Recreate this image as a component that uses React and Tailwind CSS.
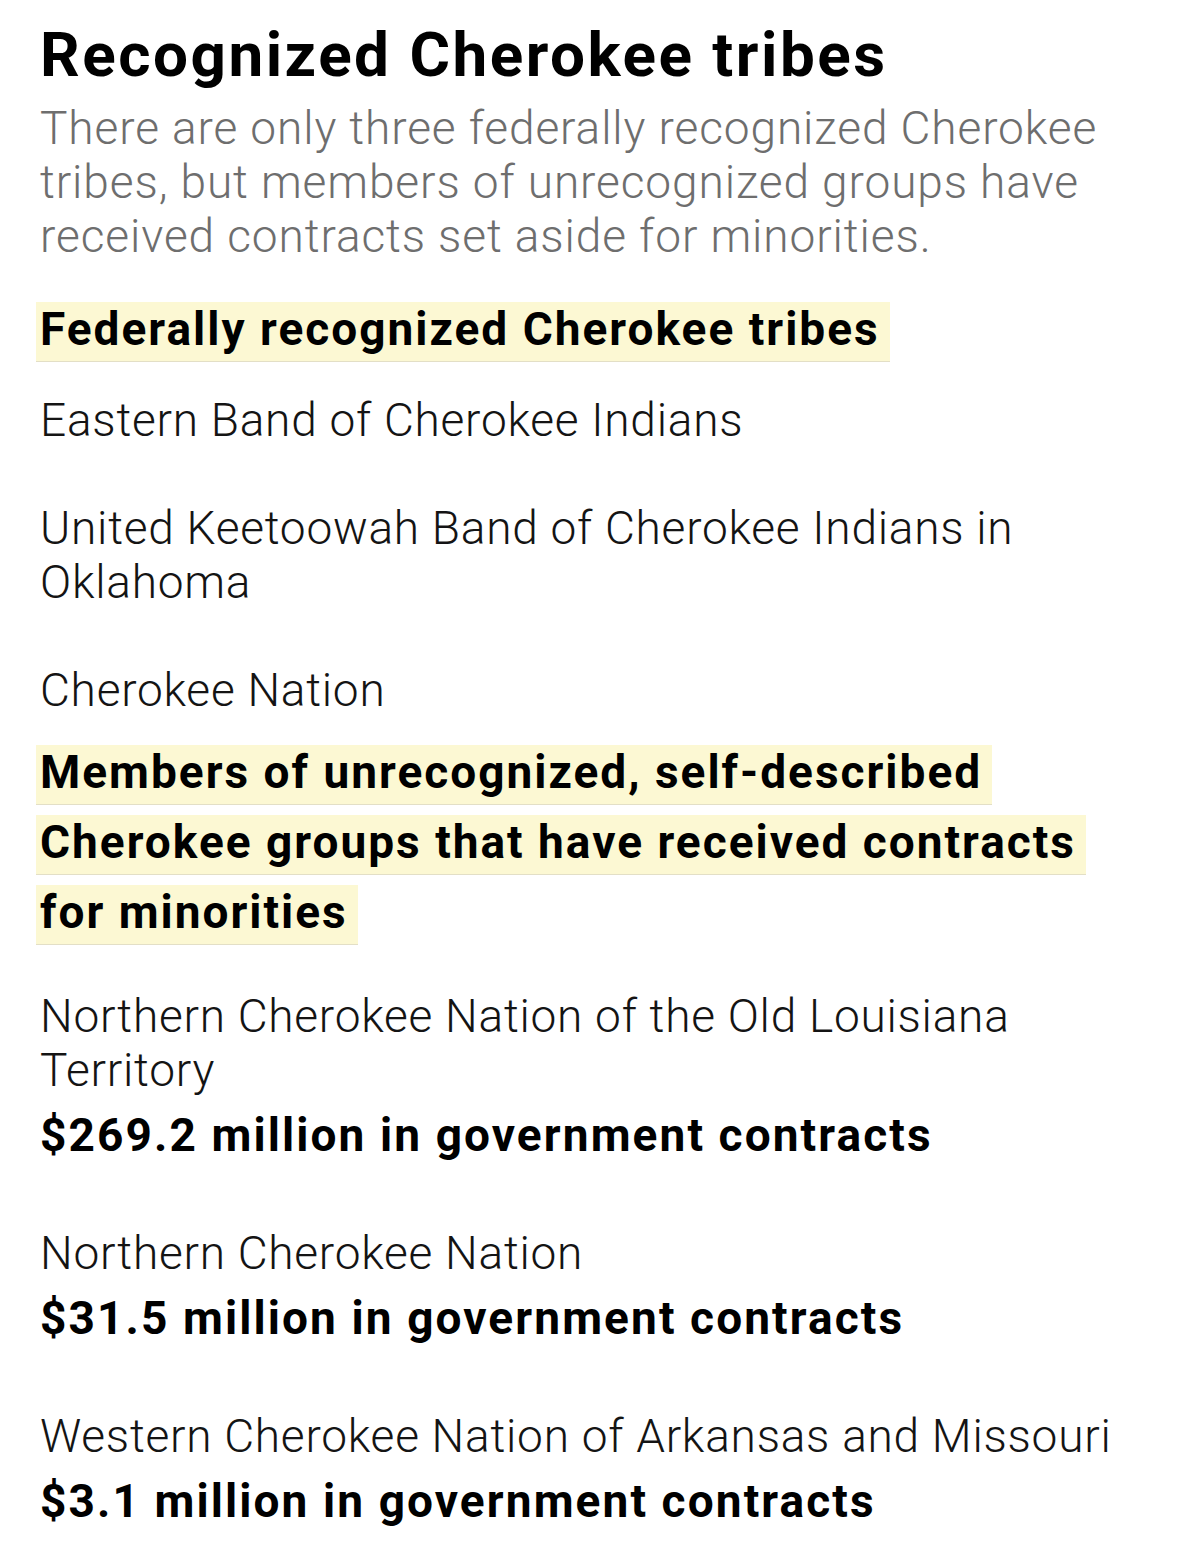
const tribes = [
  ["Eastern Band of Cherokee Indians"],
  ["United Keetoowah Band of Cherokee Indians in", "Oklahoma"],
  ["Cherokee Nation"],
];

const groups = [
  {
    name: ["Northern Cherokee Nation of the Old Louisiana", "Territory"],
    amount: "$269.2 million in government contracts",
  },
  { name: ["Northern Cherokee Nation"], amount: "$31.5 million in government contracts" },
  { name: ["Western Cherokee Nation of Arkansas and Missouri"], amount: "$3.1 million in government contracts" },
];

function Lines({ lines }) {
  return lines.map((l, i) => (
    <span key={i}>
      {i > 0 && <br />}
      {l}
    </span>
  ));
}

function Highlight({ lines }) {
  return (
    <h2 className="text-[46px] leading-[70px] font-bold tracking-[2px] text-black">
      <span className="-ml-[4px] bg-[#fcf8d3] border-b border-[#e3dfc6] pl-[4px] pr-[10px] pb-[5px] box-decoration-clone">
        <Lines lines={lines} />
      </span>
    </h2>
  );
}

export default function App() {
  return (
    <div className="min-h-screen bg-white px-10 pt-6 font-['Roboto',sans-serif] text-[#141414]">
      <h1 className="text-[62px] leading-[62px] font-bold tracking-[2.5px] text-black">Recognized Cherokee tribes</h1>
      <p className="mt-[15px] text-[46px] leading-[54px] font-light tracking-[0.9px] text-[#6e6e6e]">
        <Lines
          lines={[
            "There are only three federally recognized Cherokee",
            "tribes, but members of unrecognized groups have",
            "received contracts set aside for minorities.",
          ]}
        />
      </p>

      <div className="mt-[31px]">
        <Highlight lines={["Federally recognized Cherokee tribes"]} />
      </div>

      <div className="mt-[29px] flex flex-col gap-[54px]">
        {tribes.map((t, i) => (
          <p key={i} className="text-[46px] leading-[54px] font-light tracking-[0.75px]">
            <Lines lines={t} />
          </p>
        ))}
      </div>

      <div className="mt-[20px]">
        <Highlight lines={["Members of unrecognized, self-described", "Cherokee groups that have received contracts", "for minorities"]} />
      </div>

      <div className="mt-[42px] flex flex-col gap-[64px]">
        {groups.map((g, i) => (
          <div key={i}>
            <p className="text-[46px] leading-[54px] font-light tracking-[0.75px]">
              <Lines lines={g.name} />
            </p>
            <p className="mt-[11px] text-[46px] leading-[54px] font-bold tracking-[2.1px] text-black">{g.amount}</p>
          </div>
        ))}
      </div>
    </div>
  );
}
